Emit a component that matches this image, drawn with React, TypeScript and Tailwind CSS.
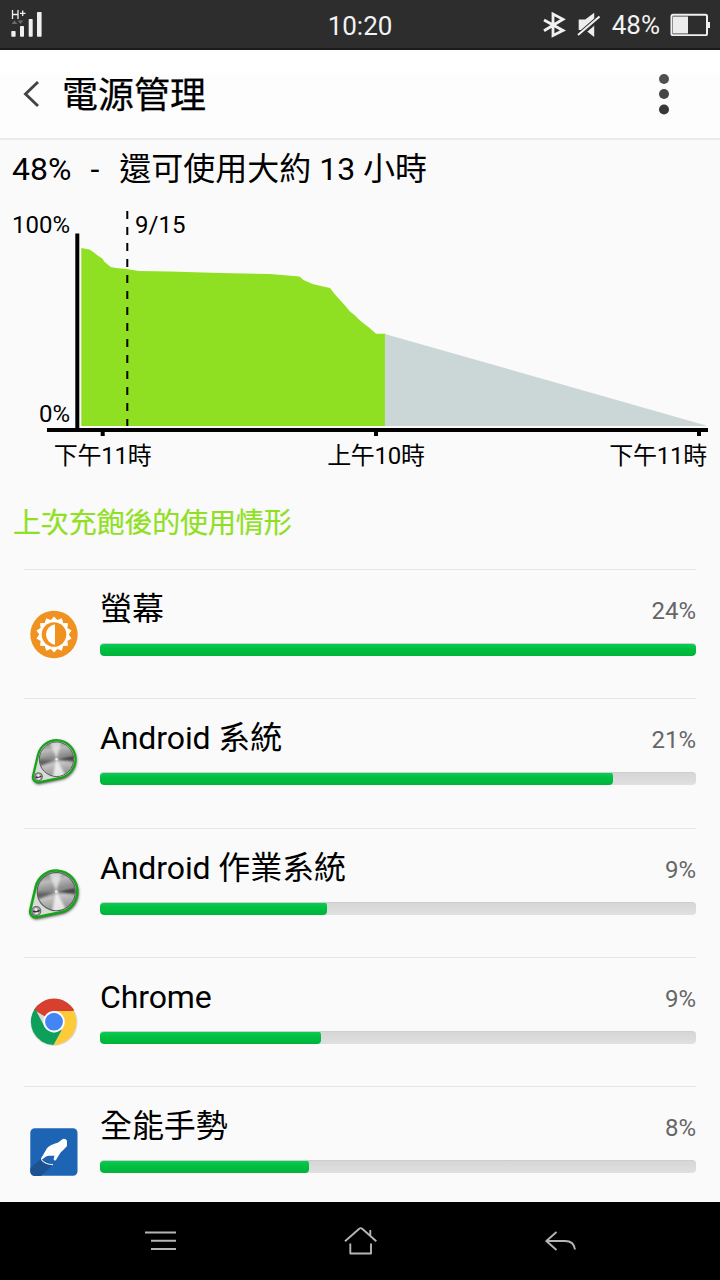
import React from 'react';

const FONT = "font-['Roboto','Noto_Sans_CJK_TC',sans-serif]";

function StatusBar() {
  return (
    <div className="grid h-[50px] shrink-0 grid-cols-3 items-center border-b-2 border-[#1b1b1b] bg-[#2d2d2d] text-[26px] text-[#f2f2f2]">
      <svg className="ml-[10px]" width="34" height="32" viewBox="10 8 34 32">
        <g stroke="#f0f0f0" strokeWidth="1.3" fill="none">
          <path d="M12.5 10v9M18 10v9M12.5 14.5H18M20 13.3h5.5M22.7 10.6V16" />
        </g>
        <path d="M11.5 24l3-3.5 3 3.5zM17.5 20.5h6l-3 3.5z" fill="#6b6b6b" />
        <g fill="#f0f0f0">
          <rect x="11.3" y="31" width="4.3" height="5.7" rx=".7" />
          <rect x="20" y="26" width="4" height="10.7" rx=".7" />
          <rect x="28.7" y="19" width="4" height="17.7" rx=".7" />
          <rect x="37" y="12" width="4.6" height="24.7" rx=".7" />
        </g>
      </svg>
      <div className="pt-[4px] text-center leading-[44px]">10:20</div>
      <div className="flex items-center justify-end pr-[10px]">
        <svg width="60" height="32" viewBox="540 8 60 32">
          <path d="M544 20l19 10.500-10 5V14l10 5.300-19 11.500" fill="none" stroke="#f0f0f0" strokeWidth="2.800" />
          <path d="M578.700 19.500h6.500l9-6.800V37l-9-7h-6.500z" fill="#ededed" />
          <path d="M577.500 36.500L600 17" stroke="#2d2d2d" strokeWidth="5.500" />
          <path d="M578 35L599.500 16.500" stroke="#f0f0f0" strokeWidth="2" />
        </svg>
        <span className="ml-3 pt-[3px] leading-[45px]">48%</span>
        <svg className="ml-[10px]" width="40" height="24" viewBox="670 12 40 24">
          <rect x="671.500" y="14.800" width="35.500" height="20.400" rx="1.500" fill="none" stroke="#f0f0f0" strokeWidth="2" />
          <rect x="673" y="16.500" width="15" height="17" fill="#ececec" />
          <rect x="708" y="22" width="2" height="6" fill="#f0f0f0" />
        </svg>
      </div>
    </div>
  );
}

function Header() {
  return (
    <header className="flex h-[90px] shrink-0 items-center border-b-2 border-[#ebebeb] bg-linear-to-b from-white from-25% to-[#fdfdfd] to-30% text-black">
      <svg className="ml-5" width="24" height="32" viewBox="20 78 24 32">
        <path d="M38 82L25.500 94 38 106" fill="none" stroke="#444" strokeWidth="2.900" />
      </svg>
      <h1 className="ml-[18px] pt-[4px] text-[36px] leading-[54px] [-webkit-text-stroke:0.25px]">電源管理</h1>
      <svg className="mr-[46px] ml-auto" width="20" height="50" viewBox="654 69 20 50">
        <circle cx="664" cy="79" r="5" fill="#505050" />
        <circle cx="664" cy="94" r="5" fill="#454545" />
        <circle cx="664" cy="109.500" r="5" fill="#383838" />
      </svg>
    </header>
  );
}

function Chart() {
  return (
    <svg width="720" height="280" viewBox="0 200 720 280" className="block shrink-0 text-[24px]">
      <path d="M384 333.700L706 425.500V426H384z" fill="#cbd6d6" />
      <path
        d="M81.300 426V248l8 1.500 4 2.500 5 4 4 2.500 2 3 3 2.700 3.500 2.800 5 1 11 1 12 2L170 271.500l50 1.500 50 1 29.500 2.500 4 3.500 9 4 8.500 2 9 2 5 6.500 5 5.500 5 5.500 5 6 5 4 5 5 5 4 4 3L376 333.800H384.900V426z"
        fill="#8fe022"
      />
      <path d="M127.300 211V426" stroke="#000" strokeWidth="2" strokeDasharray="8 8" />
      <path d="M77.300 233.500V430" stroke="#000" strokeWidth="4" />
      <path d="M47 430H708" stroke="#000" strokeWidth="4" />
      <path d="M102.700 431v5M376 431v5M699 431v5" stroke="#000" strokeWidth="4" />
      <g fill="#000">
        <text x="70" y="233" textAnchor="end">100%</text>
        <text x="70" y="422" textAnchor="end">0%</text>
        <text x="135" y="233">9/15</text>
        <g letterSpacing="-.25">
          <text x="102.700" y="464" textAnchor="middle">下午11時</text>
          <text x="376" y="464" textAnchor="middle">上午10時</text>
          <text x="707" y="464" textAnchor="end">下午11時</text>
        </g>
      </g>
    </svg>
  );
}

function BrightnessIcon() {
  const points = Array.from({ length: 28 }, (_, i) => {
    const r = i % 2 === 0 ? 18 : 14.8;
    const a = (i * Math.PI) / 14 - Math.PI / 2;
    return `${30 + r * Math.cos(a)},${30 + r * Math.sin(a)}`;
  }).join(' ');
  return (
    <svg width="60" height="60" viewBox="0 .5 60 60">
      <circle cx="30" cy="30" r="23.700" fill="#f0921f" />
      <polygon points={points} fill="#fff" />
      <circle cx="30" cy="30" r="12.300" fill="#f0921f" />
      <path d="M31 19.700A10.400 10.400 0 0 0 31 40.300z" fill="#fff" />
    </svg>
  );
}

function KnobIcon({ large }: { large?: boolean }) {
  const id = large ? 'l' : 's';
  const outline = 'M14 21A19 19 0 1 1 36.300 43.900L15.400 48.200A5.300 5.300 0 0 1 9.100 41.800z';
  return (
    <svg width="60" height="60" viewBox="0 0 60 60" className="overflow-visible">
      <defs>
        <linearGradient id={`metal-${id}`} x1="0" y1="0" x2=".2" y2="1">
          <stop offset="0" stopColor="#777" />
          <stop offset=".28" stopColor="#bbb" />
          <stop offset=".5" stopColor="#8d8d8d" />
          <stop offset=".7" stopColor="#c4c4c4" />
          <stop offset="1" stopColor="#969696" />
        </linearGradient>
        <filter id={`shade-${id}`} x="-30%" y="-30%" width="160%" height="160%">
          <feGaussianBlur stdDeviation="1.500" />
        </filter>
        <filter id={`soft-${id}`} x="-30%" y="-30%" width="160%" height="160%">
          <feGaussianBlur stdDeviation=".9" />
        </filter>
        <clipPath id={`face-${id}`}>
          <circle cx="32.500" cy="25.300" r="16.700" />
        </clipPath>
      </defs>
      <g transform={large ? 'translate(-3.800 -.4) scale(1.110)' : undefined}>
        <path d={outline} transform="translate(.5 1.300)" fill="#333" stroke="#333" filter={`url(#shade-${id})`} />
        <path d={outline} fill="#d8dcd6" stroke="#16a51a" strokeWidth="2.300" />
        <circle cx="32.500" cy="25.300" r="17.200" fill={`url(#metal-${id})`} stroke="#5c5c5c" strokeWidth="1" />
        <g clipPath={`url(#face-${id})`}>
          <g filter={`url(#soft-${id})`}>
            <path d="M32.500 25.300L25 6 38 6z" fill="#f2f2f2" opacity=".65" />
            <path d="M32.500 25.300L28 45 43 44z" fill="#fff" opacity=".75" />
            <path d="M32.500 25.300L13 26.500 14 33z" fill="#333" opacity=".6" />
            <path d="M32.500 25.300L52 21 52 28z" fill="#222" opacity=".75" />
          </g>
        </g>
        <circle cx="32.500" cy="25.300" r="1.200" fill="#eee" />
        <circle cx="14.500" cy="42.700" r="4" fill="#a8a8a8" stroke="#666" />
        <path d="M11.500 43q3 1 6-1" stroke="#333" strokeWidth="1.500" fill="none" />
        <circle cx="14.300" cy="41.500" r="1.300" fill="#eee" />
        <path d="M13.500 45l2.500-.5" stroke="#eee" strokeWidth="1.300" />
      </g>
    </svg>
  );
}

function ChromeIcon() {
  return (
    <svg width="60" height="60" viewBox="0 1.300 60 60">
      <circle cx="30" cy="30.700" r="23.500" fill="#bbb" opacity=".5" />
      <path d="M30 30L9.900 18.400A23.300 23.300 0 0 1 50.200 18.500z" fill="#d7402f" />
      <path d="M30 19.300H49.800A23.300 23.300 0 0 1 29.500 53.300L39.300 35.300z" fill="#fdca3a" />
      <path d="M29.500 53.300A23.300 23.300 0 0 1 11 16.800L20.700 35.300 30 40.700 38 37.700z" fill="#0da05b" />
      <circle cx="30" cy="30" r="10.700" fill="#fff" />
      <circle cx="30" cy="30" r="8.900" fill="#4385f5" />
    </svg>
  );
}

function GestureIcon() {
  return (
    <svg width="60" height="60" viewBox="24 1122 60 60">
      <rect x="30.300" y="1128.300" width="47.200" height="47.500" rx="4.500" fill="#1e64b4" />
      <path d="M41 1159L30.300 1168V1171.500a4.500 4.500 0 0 0 4.500 4.500H41L53 1164.500z" fill="#1c5290" />
      <path d="M62 1139.500C64 1138 66 1139 67 1141V1146C65 1149 61 1151 59 1155L56 1160C54.500 1161.500 53 1160 54 1157.500L54.500 1155.500C51 1156 48 1155 46 1156.500L41.300 1160L41 1158.500L46 1150C48 1146 52 1144.500 55 1143.500C58 1143 60 1141 62 1139.500z" fill="#fff" />
      <path d="M41.300 1159.500Q45 1164.500 53 1164.700" fill="none" stroke="#e7edf4" strokeWidth="1.200" />
    </svg>
  );
}

const usage = [
  { name: '螢幕', percent: '24%', fill: 596, height: 'h-[129px]', icon: <BrightnessIcon /> },
  { name: 'Android 系統', percent: '21%', fill: 513, height: 'h-[130px]', icon: <KnobIcon /> },
  { name: 'Android 作業系統', percent: '9%', fill: 227, height: 'h-[129px]', icon: <KnobIcon large /> },
  { name: 'Chrome', percent: '9%', fill: 221, height: 'h-[129px]', icon: <ChromeIcon /> },
  { name: '全能手勢', percent: '8%', fill: 209, height: 'h-[129px]', icon: <GestureIcon /> },
];

function UsageRow({ item }: { item: (typeof usage)[number] }) {
  return (
    <li className={`flex shrink-0 border-t border-[#e6e6e6] ${item.height}`}>
      <div className="w-[76px] pt-[35px]">{item.icon}</div>
      <div className="flex-1 pt-[15px]">
        <div className="flex h-[48px] items-start justify-between">
          <span className="text-[32px] leading-[48px] tracking-[-0.1px] text-black">{item.name}</span>
          <span className="text-[24px] leading-[53px] text-[#666]">{item.percent}</span>
        </div>
        <div className="mt-[10px] h-[13px] overflow-hidden rounded-[4px] border-t border-[#cfcfcf] bg-linear-to-b from-[#d6d6d6] to-[#e0e0e0]">
          <div className="-mt-px h-[13px] rounded-[4px] bg-linear-to-b from-[#0acb52] from-10% via-[#00bf40] via-45% to-[#00b33b]" style={{ width: item.fill }} />
        </div>
      </div>
    </li>
  );
}

function NavBar() {
  return (
    <nav className="flex h-[78px] shrink-0 items-center justify-between bg-black px-[140px]">
      <svg width="40" height="40" viewBox="140 1221 40 40" fill="none" stroke="#b5b5b5" strokeWidth="2">
        <path d="M145 1232.500h31M151 1240.700h25M151 1249h25" />
      </svg>
      <svg width="40" height="40" viewBox="340 1221 40 40" fill="none" stroke="#b5b5b5" strokeWidth="1.900" strokeLinejoin="round">
        <path d="M345 1241.300L359.500 1228.500q1.200-.8 2.400 0L376.300 1241.300M370.300 1235.500V1230M350.300 1243.500V1253.500H371V1243.500" />
      </svg>
      <svg width="40" height="40" viewBox="540 1221 40 40" fill="none" stroke="#b5b5b5" strokeWidth="1.900" strokeLinejoin="round">
        <path d="M556.500 1232L546.300 1241 556.500 1250M546.300 1241H565Q574 1241 575 1249.500" />
      </svg>
    </nav>
  );
}

export default function App() {
  return (
    <div className={`flex h-[1280px] w-[720px] flex-col overflow-hidden bg-[#fafafa] ${FONT}`}>
      <StatusBar />
      <Header />
      <main className="flex min-h-0 flex-1 flex-col overflow-hidden">
        <div className="mt-[5px] mb-[7px] flex shrink-0 pl-3 text-[32px] leading-[48px] text-black">
          <span>48%</span>
          <span className="ml-[19px]">-</span>
          <span className="ml-[20px]">還可使用大約 13 小時</span>
        </div>
        <Chart />
        <h2 className="mt-[24px] mb-[25px] shrink-0 pl-[13px] text-[28px] leading-[40px] tracking-[-0.15px] text-[#8fe022] [-webkit-text-stroke:0.2px]">上次充飽後的使用情形</h2>
        <ul className="flex flex-col px-6">
          {usage.map((item) => (
            <UsageRow key={item.name} item={item} />
          ))}
        </ul>
      </main>
      <NavBar />
    </div>
  );
}
